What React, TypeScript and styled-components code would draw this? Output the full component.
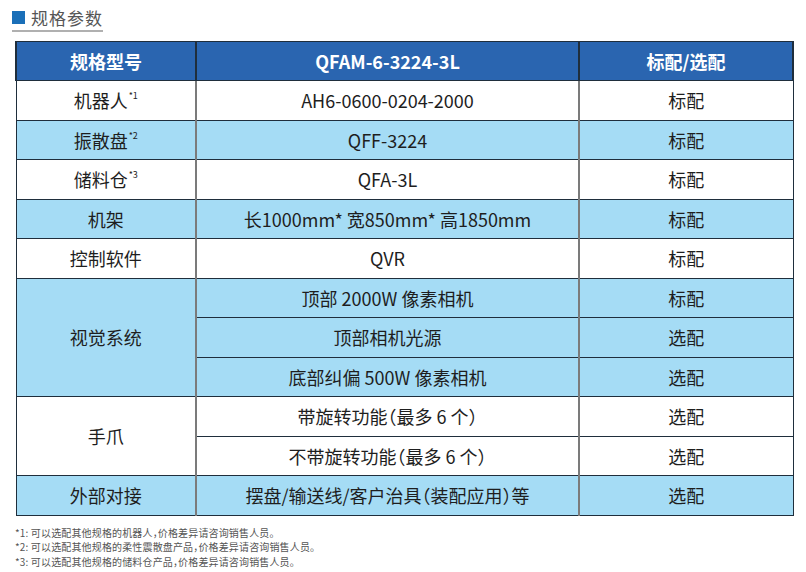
import React from "react";
import styled, { createGlobalStyle } from "styled-components";

const colors = {
  headerBlue: "#2a65b0",
  lightBlue: "#a5dcf5",
  white: "#ffffff",
  text: "#1e1e1e",
  hLine: "#1f2e3c",
  vLine: "#7b7b7b",
  note: "#555555",
};

const GlobalStyle = createGlobalStyle`
  body {
    margin: 0;
    background: #ffffff;
    font-family: "Noto Sans CJK SC", "Noto Sans", sans-serif;
    font-feature-settings: "halt";
  }
`;

type Row = {
  group?: { label: string; sup?: string; span: number };
  spec: string;
  option: string;
  blue: boolean;
};

const rows: Row[] = [
  { group: { label: "机器人", sup: "*1", span: 1 }, spec: "AH6-0600-0204-2000", option: "标配", blue: false },
  { group: { label: "振散盘", sup: "*2", span: 1 }, spec: "QFF-3224", option: "标配", blue: true },
  { group: { label: "储料仓", sup: "*3", span: 1 }, spec: "QFA-3L", option: "标配", blue: false },
  { group: { label: "机架", span: 1 }, spec: "长1000mm* 宽850mm* 高1850mm", option: "标配", blue: true },
  { group: { label: "控制软件", span: 1 }, spec: "QVR", option: "标配", blue: false },
  { group: { label: "视觉系统", span: 3 }, spec: "顶部 2000W 像素相机", option: "标配", blue: true },
  { spec: "顶部相机光源", option: "选配", blue: true },
  { spec: "底部纠偏 500W 像素相机", option: "选配", blue: true },
  { group: { label: "手爪", span: 2 }, spec: "带旋转功能（最多 6 个）", option: "选配", blue: false },
  { spec: "不带旋转功能（最多 6 个）", option: "选配", blue: false },
  { group: { label: "外部对接", span: 1 }, spec: "摆盘/输送线/客户治具（装配应用）等", option: "选配", blue: true },
];

const notes = [
  "*1: 可以选配其他规格的机器人，价格差异请咨询销售人员。",
  "*2: 可以选配其他规格的柔性震散盘产品，价格差异请咨询销售人员。",
  "*3: 可以选配其他规格的储料仓产品，价格差异请咨询销售人员。",
];

export default function App() {
  return (
    <Page>
      <GlobalStyle />
      <Title>
        <TitleMark />
        规格参数
      </Title>
      <Table>
        <colgroup>
          <col style={{ width: 180 }} />
          <col style={{ width: 383 }} />
          <col style={{ width: 214 }} />
        </colgroup>
        <thead>
          <tr>
            <HeadCell>规格型号</HeadCell>
            <HeadCell>QFAM-6-3224-3L</HeadCell>
            <HeadCell>标配/选配</HeadCell>
          </tr>
        </thead>
        <tbody>
          {rows.map((r, i) => (
            <BodyRow key={i} $blue={r.blue}>
              {r.group && (
                <Cell rowSpan={r.group.span}>
                  {r.group.label}
                  {r.group.sup && <Sup>{r.group.sup}</Sup>}
                </Cell>
              )}
              <Cell>{r.spec}</Cell>
              <Cell>{r.option}</Cell>
            </BodyRow>
          ))}
        </tbody>
      </Table>
      <Notes>
        {notes.map((n) => (
          <Note key={n}>{n}</Note>
        ))}
      </Notes>
    </Page>
  );
}

const Page = styled.div`
  width: 806px;
  height: 572px;
  padding: 5px 0 0 12px;
  box-sizing: border-box;
`;

const Title = styled.div`
  display: inline-flex;
  align-items: center;
  gap: 6px;
  font-size: 17px;
  line-height: 20px;
  color: #555;
  padding-bottom: 2px;
  border-bottom: 2px solid #b0b0b0;
  letter-spacing: 1px;
`;

const TitleMark = styled.span`
  width: 13px;
  height: 13px;
  background: #1a6fb8;
`;

const Table = styled.table`
  margin: 9px 0 0 3px;
  width: 777px;
  border-collapse: collapse;
  table-layout: fixed;
  border: 1px solid ${colors.hLine};
`;

const HeadCell = styled.th`
  height: 38.5px;
  padding: 0;
  background: ${colors.headerBlue};
  color: ${colors.white};
  font-size: 18px;
  font-weight: 700;
  text-align: center;
  border: 1px solid ${colors.hLine};
  border-left-width: 2px;
  border-right-width: 2px;
`;

const BodyRow = styled.tr<{ $blue: boolean }>`
  background: ${(p) => (p.$blue ? colors.lightBlue : colors.white)};
`;

const Cell = styled.td`
  height: 38.5px;
  padding: 0;
  text-align: center;
  font-size: 18px;
  color: ${colors.text};
  border-top: 1px solid ${colors.hLine};
  border-bottom: 1px solid ${colors.hLine};
  border-left: 2px solid ${colors.vLine};
  border-right: 2px solid ${colors.vLine};

  &:first-child {
    border-left: 1px solid ${colors.hLine};
  }
  &:last-child {
    border-right: 1px solid ${colors.hLine};
  }
`;

const Sup = styled.sup`
  font-size: 9px;
  line-height: 0;
  vertical-align: 9px;
  margin-left: 1px;
`;

const Notes = styled.div`
  margin: 10px 0 0 3px;
  display: flex;
  flex-direction: column;
`;

const Note = styled.div`
  font-size: 10px;
  line-height: 14.5px;
  letter-spacing: 0.15px;
  color: ${colors.note};
`;
